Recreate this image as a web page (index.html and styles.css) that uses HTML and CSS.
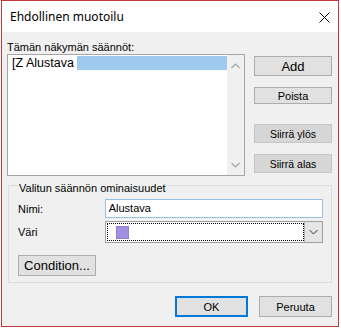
FILE: index.html
```html
<!DOCTYPE html>
<html lang="fi">
<head>
    <meta charset="UTF-8">
    <title>Ehdollinen muotoilu</title>
    <link rel="stylesheet" href="styles.css">
</head>
<body>
    <div class="window">
        <div class="titlebar">
            <span class="title">Ehdollinen muotoilu</span>
            <svg class="close" width="11" height="11" viewBox="0 0 11 11">
                <path d="M0.5 0.5 L10.5 10.5 M10.5 0.5 L0.5 10.5" stroke="#000" stroke-width="1" fill="none"/>
            </svg>
        </div>

        <div class="content">
            <div class="rules">
                <div class="rules-left">
                    <div class="label">Tämän näkymän säännöt:</div>
                    <div class="listbox">
                        <div class="list-items">
                            <div class="item">
                                <span class="item-text">[Z Alustava</span>
                                <span class="item-sel"></span>
                            </div>
                        </div>
                        <div class="scrollbar">
                            <svg width="9" height="6" viewBox="0 0 9 6">
                                <path d="M0.5 5 L4.5 1 L8.5 5" stroke="#a3a3a3" stroke-width="1.2" fill="none"/>
                            </svg>
                            <svg width="9" height="6" viewBox="0 0 9 6">
                                <path d="M0.5 1 L4.5 5 L8.5 1" stroke="#a3a3a3" stroke-width="1.2" fill="none"/>
                            </svg>
                        </div>
                    </div>
                </div>
                <div class="rules-buttons">
                    <button class="btn btn-add">Add</button>
                    <button class="btn btn-remove">Poista</button>
                    <button class="btn btn-move btn-up">Siirrä ylös</button>
                    <button class="btn btn-move btn-down">Siirrä alas</button>
                </div>
            </div>

            <div class="group">
                <div class="group-title">Valitun säännön ominaisuudet</div>
                <div class="field field-name">
                    <span class="field-label">Nimi:</span>
                    <div class="textbox">Alustava</div>
                </div>
                <div class="field field-color">
                    <span class="field-label">Väri</span>
                    <div class="combo">
                        <div class="combo-value"><span class="swatch"></span></div>
                        <div class="combo-arrow">
                            <svg width="9" height="6" viewBox="0 0 9 6">
                                <path d="M0.5 1 L4.5 5 L8.5 1" stroke="#333" stroke-width="1" fill="none"/>
                            </svg>
                        </div>
                    </div>
                </div>
                <button class="btn btn-condition">Condition...</button>
            </div>

            <div class="footer">
                <button class="btn btn-ok">OK</button>
                <button class="btn btn-cancel">Peruuta</button>
            </div>
        </div>
    </div>
</body>
</html>
```

FILE: styles.css
```css
html, body {
    margin: 0;
    padding: 0;
    background-color: #ffffff;
}
body {
    font-family: "Liberation Sans", Arial, sans-serif;
    font-size: 11px;
    color: #000;
}
.window {
    box-sizing: border-box;
    width: 338px;
    height: 327px;
    margin-left: 1px;
    border: 1px solid #c4393b;
    background-color: #f0f0f0;
    display: flex;
    flex-direction: column;
}
.titlebar {
    height: 31px;
    background-color: #ffffff;
    display: flex;
    align-items: center;
    justify-content: space-between;
    padding: 0 8px 0 8px;
}
.title {
    font-family: "Noto Sans", "Liberation Sans", sans-serif;
    font-size: 12px;
    color: #000;
}
.close {
    display: block;
    margin-top: 1px;
}
.content {
    padding: 9px 6px 0 5px;
}
.rules {
    display: flex;
    gap: 9px;
}
.rules-left {
    width: 238px;
}
.label {
    line-height: 13px;
    height: 13px;
}
.listbox {
    box-sizing: border-box;
    height: 122px;
    border: 1px solid #a5a5a5;
    background-color: #fff;
    display: flex;
}
.list-items {
    flex: 1;
    padding: 1px 0 0 4px;
}
.item {
    display: flex;
    height: 14px;
    align-items: center;
}
.item-text {
    font-size: 12.5px;
    padding-right: 3px;
}
.item-sel {
    flex: 1;
    height: 14px;
    background-color: #9fcaf0;
}
.scrollbar {
    width: 17px;
    background-color: #f0f0f0;
    display: flex;
    flex-direction: column;
    justify-content: space-between;
    align-items: center;
    padding: 8px 0 7px 0;
}
.scrollbar svg {
    display: block;
}
.rules-buttons {
    width: 78px;
    display: flex;
    flex-direction: column;
    padding-top: 15px;
}
.btn {
    box-sizing: border-box;
    font-family: "Liberation Sans", Arial, sans-serif;
    font-size: 11px;
    color: #000;
    background-color: #e1e1e1;
    border: 1px solid #adadad;
    padding: 0;
    margin: 0;
}
.btn-add {
    height: 20px;
    font-size: 13px;
}
.btn-remove {
    height: 17px;
    margin-top: 11px;
}
.btn-move {
    height: 19px;
    font-size: 10.5px;
    background-color: #d6d6d6;
    border-color: #c6c6c6;
}
.btn-up {
    margin-top: 20px;
}
.btn-down {
    margin-top: 11px;
}
.group {
    margin: 9px 0 0 1px;
    border: 1px solid #dcdcdc;
    padding: 0 8px 6px 9px;
}
.group-title {
    width: max-content;
    margin: -4px 0 0 0;
    padding: 0 1px;
    line-height: 13px;
    background-color: #f0f0f0;
}
.field {
    display: flex;
    align-items: center;
}
.field-label {
    width: 87px;
}
.field-name {
    margin-top: 4px;
}
.textbox {
    box-sizing: border-box;
    width: 219px;
    height: 19px;
    border: 1px solid #99c0e6;
    background-color: #fff;
    padding: 0 3px;
    line-height: 17px;
}
.field-color {
    margin-top: 3px;
}
.combo {
    box-sizing: border-box;
    width: 219px;
    height: 22px;
    border: 1px solid #a0a0a0;
    background-color: #fff;
    display: flex;
    padding: 1px 0 1px 1px;
}
.combo-value {
    flex: 1;
    border: 1px dotted #000;
    display: flex;
    align-items: center;
    padding-left: 8px;
}
.swatch {
    width: 13px;
    height: 13px;
    background-color: #a08fe2;
    border: 1px solid #8f80d0;
    box-sizing: border-box;
}
.combo-arrow {
    width: 17px;
    margin: -1px 0;
    background-color: #e5e5e5;
    border-left: 1px solid #b0b0b0;
    display: flex;
    align-items: center;
    justify-content: center;
}
.combo-arrow svg {
    display: block;
}
.btn-condition {
    display: block;
    width: 78px;
    height: 21px;
    margin-top: 12px;
    font-size: 13px;
}
.footer {
    display: flex;
    justify-content: flex-end;
    gap: 11px;
    margin-top: 13px;
}
.btn-ok {
    width: 73px;
    height: 21px;
    border: 2px solid #0078d7;
}
.btn-cancel {
    width: 73px;
    height: 21px;
}
```
